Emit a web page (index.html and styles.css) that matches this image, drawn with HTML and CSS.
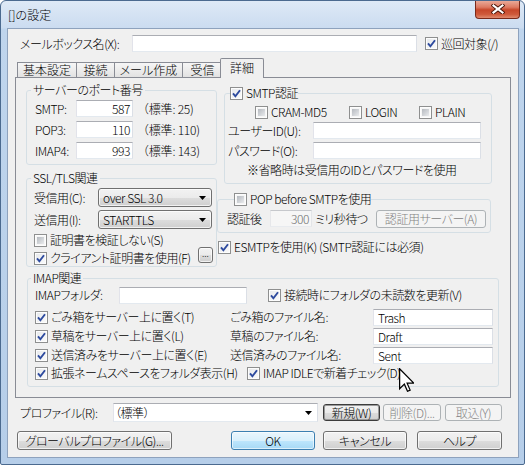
FILE: index.html
```html
<!DOCTYPE html>
<html lang="ja">
<head>
<meta charset="utf-8">
<title>[]の設定</title>
<link rel="stylesheet" href="styles.css">
</head>
<body>
<div class="window">
  <div class="titlebar">
    <span class="title">[]の設定</span>
    <span class="close"><svg viewBox="0 0 14 10" width="14" height="10"><path class="x-out" d="M2.5 1.5 11.5 8.5M11.5 1.5 2.5 8.5"/><path class="x-in" d="M2.5 1.5 11.5 8.5M11.5 1.5 2.5 8.5"/></svg></span>
  </div>
  <div class="client">
    <div class="mailbox-row">
      <span class="mb-label">メールボックス名(X):</span>
      <span class="edit mb-edit"></span>
      <span class="chk mb-chk"><span class="cb on"><svg viewBox="0 0 11 11"><path d="M2 5.3 4.4 8.3 9 2.2"/></svg></span>巡回対象(/)</span>
    </div>

    <div class="tabs">
      <span class="tab t1">基本設定</span>
      <span class="tab t2">接続</span>
      <span class="tab t3">メール作成</span>
      <span class="tab t4">受信</span>
      <span class="tab active">詳細</span>
    </div>

    <div class="panel">
      <div class="cols">
        <div class="col-left">
          <fieldset class="grp ports">
            <legend>サーバーのポート番号</legend>
            <div class="ports-grid">
              <span>SMTP:</span><span class="edit num">587</span><span class="std">（標準: 25)</span>
              <span>POP3:</span><span class="edit num">110</span><span class="std">（標準: 110)</span>
              <span>IMAP4:</span><span class="edit num">993</span><span class="std">（標準: 143)</span>
            </div>
          </fieldset>

          <fieldset class="grp ssl">
            <legend>SSL/TLS関連</legend>
            <div class="ssl-body">
              <div class="ssl-row"><span class="ssl-lbl">受信用(C):</span><span class="dd">over SSL 3.0<svg class="arrow" viewBox="0 0 7 4"><path d="M0 0h7L3.5 4z"/></svg></span></div>
              <div class="ssl-row second"><span class="ssl-lbl">送信用(I):</span><span class="dd">STARTTLS<svg class="arrow" viewBox="0 0 7 4"><path d="M0 0h7L3.5 4z"/></svg></span></div>
              <div class="chk ssl-c1"><span class="cb"></span>証明書を検証しない(S)</div>
              <div class="ssl-c2">
                <span class="chk"><span class="cb on"><svg viewBox="0 0 11 11"><path d="M2 5.3 4.4 8.3 9 2.2"/></svg></span>クライアント証明書を使用(F)</span>
                <span class="btn dots">...</span>
              </div>
            </div>
          </fieldset>
        </div>

        <div class="col-right">
          <fieldset class="grp smtp">
            <legend><span class="chk"><span class="cb on"><svg viewBox="0 0 11 11"><path d="M2 5.3 4.4 8.3 9 2.2"/></svg></span>SMTP認証</span></legend>
            <div class="smtp-body">
              <div class="auth-row">
                <span class="chk"><span class="cb"></span>CRAM-MD5</span>
                <span class="chk"><span class="cb"></span>LOGIN</span>
                <span class="chk"><span class="cb"></span>PLAIN</span>
              </div>
              <div class="cred-row"><span class="cred-lbl">ユーザーID(U):</span><span class="edit cred-edit"></span></div>
              <div class="cred-row pw"><span class="cred-lbl">パスワード(O):</span><span class="edit cred-edit"></span></div>
              <div class="note">※省略時は受信用のIDとパスワードを使用</div>
            </div>
          </fieldset>

          <fieldset class="grp pop">
            <legend><span class="chk"><span class="cb"></span>POP before SMTPを使用</span></legend>
            <div class="pop-row">
              <span class="pop-lbl">認証後</span>
              <span class="edit num wait">300</span>
              <span class="ms">ミリ秒待つ</span>
              <span class="btn disabled authsrv">認証用サーバー(A)</span>
            </div>
          </fieldset>

          <div class="chk esmtp"><span class="cb on"><svg viewBox="0 0 11 11"><path d="M2 5.3 4.4 8.3 9 2.2"/></svg></span>ESMTPを使用(K) (SMTP認証には必須)</div>
        </div>
      </div>

      <fieldset class="grp imap">
        <legend>IMAP関連</legend>
        <div class="imap-body">
          <div class="imap-row first">
            <span class="imap-lbl">IMAPフォルダ:</span>
            <span class="edit folder-edit"></span>
            <span class="chk unread"><span class="cb on"><svg viewBox="0 0 11 11"><path d="M2 5.3 4.4 8.3 9 2.2"/></svg></span>接続時にフォルダの未読数を更新(V)</span>
          </div>
          <div class="imap-grid">
            <span class="chk"><span class="cb on"><svg viewBox="0 0 11 11"><path d="M2 5.3 4.4 8.3 9 2.2"/></svg></span>ごみ箱をサーバー上に置く(T)</span>
            <span>ごみ箱のファイル名:</span>
            <span class="edit name-edit">Trash</span>

            <span class="chk"><span class="cb on"><svg viewBox="0 0 11 11"><path d="M2 5.3 4.4 8.3 9 2.2"/></svg></span>草稿をサーバー上に置く(L)</span>
            <span>草稿のファイル名:</span>
            <span class="edit name-edit">Draft</span>

            <span class="chk"><span class="cb on"><svg viewBox="0 0 11 11"><path d="M2 5.3 4.4 8.3 9 2.2"/></svg></span>送信済みをサーバー上に置く(E)</span>
            <span>送信済みのファイル名:</span>
            <span class="edit name-edit">Sent</span>

            <span class="chk"><span class="cb on"><svg viewBox="0 0 11 11"><path d="M2 5.3 4.4 8.3 9 2.2"/></svg></span>拡張ネームスペースをフォルダ表示(H)</span>
            <span class="chk idle"><span class="cb on"><svg viewBox="0 0 11 11"><path d="M2 5.3 4.4 8.3 9 2.2"/></svg></span>IMAP IDLEで新着チェック(D)</span>
          </div>
        </div>
      </fieldset>
    </div>

    <div class="profile-row">
      <span class="pr-label">プロファイル(R):</span>
      <span class="combo">（標準）<svg class="arrow" viewBox="0 0 7 4"><path d="M0 0h7L3.5 4z"/></svg></span>
      <span class="btn default new">新規(W)</span>
      <span class="btn disabled del">削除(D)...</span>
      <span class="btn disabled imp">取込(Y)</span>
    </div>

    <div class="button-row">
      <span class="btn global">グローバルプロファイル(G)...</span>
      <span class="btn focus ok">OK</span>
      <span class="btn cancel">キャンセル</span>
      <span class="btn help">ヘルプ</span>
    </div>
  </div>

  <svg class="cursor" viewBox="0 0 12 19" width="12" height="19"><path d="M0.5 0.5V16.5L4.3 12.8 6.8 18.5 8.9 17.6 6.5 12H11.8Z"/></svg>
</div>
</body>
</html>
```

FILE: styles.css
```css
* { box-sizing: border-box; }
html, body { margin: 0; padding: 0; }
body {
  width: 525px;
  height: 465px;
  overflow: hidden;
  background: #ffffff;
  font-family: "Noto Sans CJK JP", "Noto Sans", sans-serif;
  font-weight: 300;
  font-size: 12px;
  line-height: 14px;
  letter-spacing: -0.45px;
  color: #000;
  font-feature-settings: "palt";
  white-space: nowrap;
}

/* window frame */
.window {
  position: relative;
  width: 525px;
  height: 465px;
  border: 1px solid #4b6a8f;
  border-radius: 6px 6px 2px 2px;
  background: linear-gradient(to bottom, #dee9f6 0px, #cbdcf0 27px, #bfd5ed 28px, #b6cee9 100%);
  display: flex;
  flex-direction: column;
  overflow: hidden;
}
.titlebar {
  height: 27px;
  flex: none;
  display: flex;
  align-items: flex-start;
  padding-left: 7px;
}
.title { line-height: 27px; letter-spacing: 0; }
.close {
  margin-left: auto;
  margin-top: -1px;
  margin-right: 4px;
  width: 45px;
  height: 19px;
  border: 1px solid #7a2a1a;
  border-top: none;
  border-radius: 0 0 4px 4px;
  background: linear-gradient(to bottom, #ebb0a0 0%, #dd7a62 40%, #c7472a 55%, #cf5a3b 80%, #e08a6e 100%);
  display: flex;
  align-items: center;
  justify-content: center;
}
.close svg { display: block; }
.x-out { stroke: #4a1408; stroke-width: 4; stroke-linecap: square; fill: none; }
.x-in { stroke: #ffffff; stroke-width: 2.2; stroke-linecap: square; fill: none; }

.client {
  flex: 1;
  margin: 0 5px 6px 6px;
  border: 1px solid #8ea2bd;
  background: #f0f0f0;
}

/* common controls */
.edit {
  display: block;
  height: 17px;
  border: 1px solid;
  border-color: #abadb3 #dbdfe6 #e3e9ef #e2e3ea;
  background: #fff;
  padding: 0 3px;
  line-height: 15px;
}
.edit.num { text-align: right; padding-right: 2px; }

.chk { display: flex; align-items: center; }
.cb {
  flex: none;
  width: 13px;
  height: 13px;
  margin-right: 3px;
  border: 1px solid #8e8f8f;
  padding: 2px;
  background: linear-gradient(135deg, #b5b9bf, #e9ebed) content-box, #f6f6f6;
  box-shadow: inset 0 0 0 1px #fdfdfd;
}
.cb.on {
  padding: 0;
  background: linear-gradient(135deg, #e6e8eb, #fbfbfb);
}
.cb svg { display: block; width: 11px; height: 11px; }
.cb path { fill: none; stroke: #2d4a9e; stroke-width: 1.9; }

.btn {
  display: flex;
  align-items: center;
  justify-content: center;
  border: 1px solid #707070;
  border-radius: 3px;
  background: linear-gradient(to bottom, #f2f2f2 0%, #ebebeb 50%, #dddddd 51%, #cfcfcf 100%);
  box-shadow: inset 0 0 0 1px rgba(255,255,255,0.7);
}
.btn.disabled {
  border-color: #adb2b5;
  background: #f4f4f4;
  box-shadow: none;
  color: #838383;
}
.btn.default { border-color: #3c3c3c; box-shadow: inset 0 0 0 1px #9a9a9a; }
.btn.focus {
  border-color: #3c7fb1;
  background: linear-gradient(to bottom, #eaf6fd 0%, #d9f0fc 50%, #bee6fd 51%, #a7d9f5 100%);
  box-shadow: inset 0 0 0 1px rgba(255,255,255,0.6);
}

.arrow { display: block; width: 7px; height: 4px; flex: none; }
.arrow path { fill: #000; }

/* first row */
.mailbox-row {
  margin-top: 6px;
  height: 17px;
  display: flex;
  align-items: center;
  padding-left: 12px;
}
.mb-label { width: 112px; }
.mb-edit { width: 285px; }
.mb-chk { margin-left: 8px; }

/* tabs */
.tabs {
  margin-top: 6px;
  height: 20px;
  display: flex;
  align-items: flex-end;
  padding-left: 9px;
}
.tab {
  height: 15px;
  margin-bottom: 1px;
  border: 1px solid #898c95;
  border-bottom: none;
  margin-right: -1px;
  background: linear-gradient(to bottom, #f6f6f6, #e2e2e2);
  display: flex;
  align-items: center;
  justify-content: center;
  letter-spacing: 0;
}
.t1 { width: 60px; }
.t2 { width: 39px; }
.t3 { width: 69px; }
.t4 { width: 41px; }
.tab.active {
  position: relative;
  z-index: 1;
  height: 20px;
  margin-bottom: 0;
  margin-left: -2px;
  width: 44px;
  background: #f0f0f0;
  border-radius: 2px 2px 0 0;
  padding-bottom: 1px;
}

.panel {
  margin-top: -1px;
  margin-left: 7px;
  width: 496px;
  height: 321px;
  border: 1px solid #898c95;
  background: #f0f0f0;
  padding-left: 10px;
}

.cols { display: flex; }
.col-left { width: 191px; flex: none; }
.col-right { margin-left: 7px; width: 275px; flex: none; }

.grp {
  margin: 0;
  padding: 0;
  min-inline-size: 0;
  border: 1px solid #d5dfe5;
  border-radius: 3px;
}
.grp > legend {
  padding: 0 2px;
  margin-left: 4px;
  line-height: 14px;
}

/* ports */
.ports { margin-top: 5px; width: 191px; }
.ports-grid {
  display: grid;
  grid-template-columns: 41px 57px auto;
  grid-template-rows: repeat(3, 17px);
  row-gap: 4px;
  align-items: center;
  padding: 3px 0 5px 8px;
}
.std { padding-left: 4px; font-feature-settings: normal; letter-spacing: -0.2px; }

/* ssl */
.ssl { margin-top: 6px; width: 191px; }
.ssl-body { padding: 3px 0 1px 7px; }
.ssl-row { display: flex; align-items: center; height: 19px; }
.ssl-row.second { margin-top: 3px; }
.ssl-lbl { width: 64px; }
.dd {
  width: 114px;
  height: 19px;
  border: 1px solid #707070;
  border-radius: 3px;
  background: linear-gradient(to bottom, #f2f2f2 0%, #ebebeb 50%, #dddddd 51%, #cfcfcf 100%);
  box-shadow: inset 0 0 0 1px rgba(255,255,255,0.7);
  display: flex;
  align-items: center;
  justify-content: space-between;
  padding: 0 5px 0 4px;
}
.ssl-c1 { margin-top: 4px; height: 14px; }
.ssl-c2 {
  height: 18px;
  display: flex;
  align-items: flex-end;
  justify-content: space-between;
  padding-right: 3px;
}
.dots {
  width: 15px;
  height: 16px;
  margin-bottom: 2px;
  font-size: 9px;
  line-height: 10px;
  padding-bottom: 3px;
  align-items: flex-end;
  letter-spacing: 0;
}

/* smtp */
.smtp { margin-top: 8px; width: 268px; }
.smtp > legend { margin-left: 5px; padding: 0; }
.smtp-body { padding: 5px 0 6px 3px; }
.auth-row {
  display: grid;
  grid-template-columns: 94px 70px auto;
  padding-left: 27px;
  height: 14px;
}
.cred-row { margin-top: 3px; display: flex; align-items: center; height: 17px; }
.cred-lbl { width: 85px; }
.cred-edit { width: 168px; }
.note { margin-top: 4px; padding-left: 19px; height: 14px; }

/* pop before smtp */
.pop { margin-top: 8px; margin-left: -7px; width: 274px; }
.pop > legend { margin-left: 16px; padding: 0; }
.pop-row {
  display: flex;
  align-items: center;
  height: 19px;
  margin: 3px 0 4px;
  padding: 0 4px 0 9px;
}
.pop-lbl { width: 43px; }
.wait { width: 42px; background: #f6f6f6; color: #6d6d6d; border-color: #c6c8cc #e3e5e8 #e8ebef #e6e7ea; }
.ms { margin-left: 3px; }
.authsrv { margin-left: auto; width: 110px; height: 18px; }

.esmtp { margin-top: 7px; margin-left: -6px; height: 14px; }

/* imap */
.imap { margin-top: 4px; margin-left: 1px; width: 472px; }
.imap > legend { margin-left: 3px; }
.imap-body { padding: 1px 0 4px 7px; }
.imap-row.first { display: flex; align-items: center; height: 18px; }
.imap-lbl { width: 84px; }
.folder-edit { width: 128px; }
.unread { margin-left: 21px; }
.imap-grid {
  margin-top: 4px;
  display: grid;
  grid-template-columns: 195px 143px 120px;
  grid-template-rows: 18px 20px 18px 18px;
  align-items: center;
}
.name-edit { width: 120px; padding-left: 4px; }
.idle { grid-column: 2 / 4; margin-left: 17px; }

/* bottom */
.profile-row {
  margin-top: 5px;
  height: 19px;
  display: flex;
  align-items: center;
  padding-left: 12px;
}
.pr-label { width: 93px; }
.combo {
  width: 205px;
  height: 19px;
  border: 1px solid;
  border-color: #abadb3 #dbdfe6 #e3e9ef #e2e3ea;
  background: #fff;
  display: flex;
  align-items: center;
  justify-content: space-between;
  padding: 0 5px 0 1px;
}
.profile-row .btn { height: 17px; }
.new { margin-left: 5px; width: 57px; }
.del { margin-left: 3px; width: 58px; }
.imp { margin-left: 4px; width: 57px; }

.button-row {
  margin-top: 9px;
  height: 19px;
  display: flex;
  padding-left: 9px;
}
.button-row .btn { height: 19px; }
.global { width: 155px; }
.ok { margin-left: 59px; width: 84px; }
.cancel { margin-left: 8px; width: 84px; }
.help { margin-left: 10px; width: 85px; }

/* mouse pointer overlay */
.cursor {
  position: absolute;
  left: 398px;
  top: 367px;
  width: 15px;
  height: 24px;
}
.cursor path { fill: #fff; stroke: #000; stroke-width: 1; stroke-linejoin: miter; }
```
